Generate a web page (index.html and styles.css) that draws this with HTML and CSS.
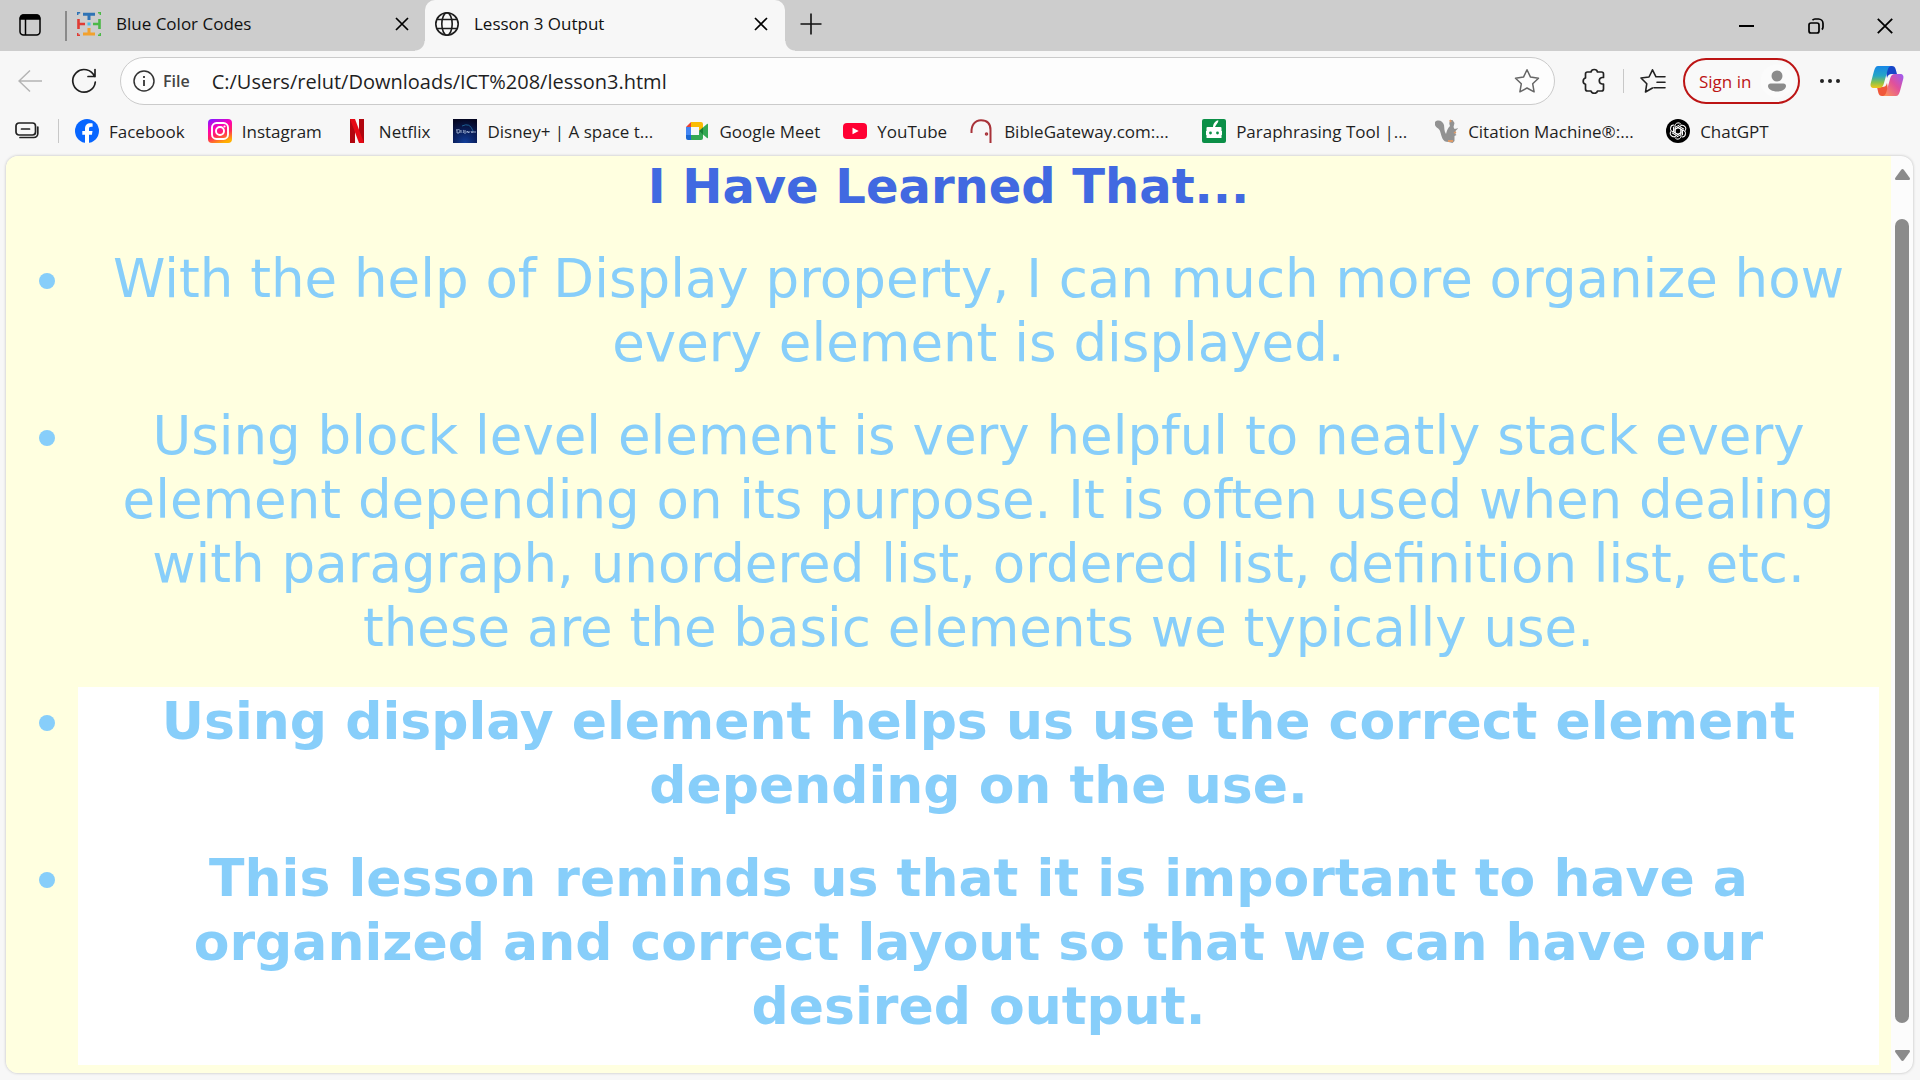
FILE: index.html
```html
<!DOCTYPE html>
<html lang="en">
<head>
<meta charset="utf-8">
<title>Lesson 3 Output</title>
<link rel="stylesheet" href="styles.css">
</head>
<body>
<header class="browser">
  <div class="tabstrip">
    <button class="icon-btn tab-actions" aria-label="Tab actions">
      <svg width="22" height="22" viewBox="0 0 22 22" fill="none" stroke="#000" stroke-width="1.5"><rect x="1" y="1" width="20" height="20" rx="3.5"/><path d="M1.5 5V4a3 3 0 0 1 3-3h13a3 3 0 0 1 3 3v1z" fill="#000"/><path d="M6.5 5v16"/></svg>
    </button>
    <div class="tab">
      <svg class="icon" viewBox="0 0 24 24" fill="none"><path d="M6 2.200h12M12 2v6" stroke="#2f73b5" stroke-width="3"/><path d="M6 22h12M12 22v-6" stroke="#f2a12e" stroke-width="3"/><path d="M1.500 7v10M1 12h7" stroke="#e03c35" stroke-width="2.600"/><path d="M22.500 7v10M23 12h-7" stroke="#4db848" stroke-width="2.600"/><path d="M10.500 12h3M12 10.500v3" stroke="#4ac0ea" stroke-width="3"/><path d="M.7 3V.7h2.500" stroke="#2f73b5" stroke-width="1.500"/><path d="M21 .7h2.300V3" stroke="#4db848" stroke-width="1.500"/><path d="M.7 21v2.300H3" stroke="#e03c35" stroke-width="1.500"/><path d="M21 23.300h2.300V21" stroke="#4db848" stroke-width="1.500"/></svg>
      <a class="tab-title" href="#">Blue Color Codes</a>
      <button class="icon-btn" aria-label="Close tab"><svg width="14" height="14" viewBox="0 0 14 14" stroke="#000" stroke-width="1.700"><path d="M1 1l12 12M13 1L1 13"/></svg></button>
    </div>
    <div class="tab tab-active">
      <svg class="icon" viewBox="0 0 24 24" fill="none" stroke="#1c1c1c" stroke-width="1.600"><circle cx="12" cy="12" r="11.200"/><ellipse cx="12" cy="12" rx="5.200" ry="11.200"/><path d="M2 7.500h20M2 16.500h20"/></svg>
      <a class="tab-title" href="#">Lesson 3 Output</a>
      <button class="icon-btn" aria-label="Close tab"><svg width="14" height="14" viewBox="0 0 14 14" stroke="#000" stroke-width="1.700"><path d="M1 1l12 12M13 1L1 13"/></svg></button>
    </div>
    <button class="icon-btn new-tab" aria-label="New tab"><svg width="22" height="22" viewBox="0 0 22 22" stroke="#111" stroke-width="1.600"><path d="M11 .5v21M.5 11h21"/></svg></button>
    <div class="window-controls">
      <button class="icon-btn" aria-label="Minimize"><svg width="16" height="16" viewBox="0 0 16 16" stroke="#000" stroke-width="2"><path d="M0 8h15"/></svg></button>
      <button class="icon-btn" aria-label="Restore"><svg width="16" height="16" viewBox="0 0 16 16" fill="none" stroke="#000" stroke-width="1.700"><rect x="1" y="5" width="10" height="10" rx="2"/><path d="M4.500 2.200C5.200 1.300 6 1 7 1h3.500A4.500 4.500 0 0 1 15 5.500V9c0 1.200-.4 2-1.200 2.500"/></svg></button>
      <button class="icon-btn" aria-label="Close"><svg width="16" height="16" viewBox="0 0 16 16" stroke="#000" stroke-width="1.800"><path d="M.8.8l14.400 14.400M15.200.8L.8 15.200"/></svg></button>
    </div>
  </div>

  <div class="toolbar">
    <button class="icon-btn" aria-label="Back"><svg width="24" height="24" viewBox="0 0 24 24" fill="none" stroke="#b4b4b4" stroke-width="1.500"><path d="M24 12H1M12 1.500L1 12l11 10.500"/></svg></button>
    <button class="icon-btn" aria-label="Refresh"><svg width="26" height="26" viewBox="0 0 26 26" fill="none" stroke="#1f1f1f" stroke-width="1.700" stroke-linecap="round"><path d="M23.500 8.500A11.300 11.300 0 1 0 24.300 14M24 1.500v7h-7"/></svg></button>
    <div class="omnibox">
      <svg class="info" width="22" height="22" viewBox="0 0 22 22" fill="none" stroke="#333" stroke-width="1.500"><circle cx="11" cy="11" r="10"/><path d="M11 10v6M11 6v2" stroke-width="1.800"/></svg>
      <label for="address">File</label>
      <input id="address" type="text" value="C:/Users/relut/Downloads/ICT%208/lesson3.html">
      <button class="icon-btn" aria-label="Add to favorites"><svg width="26" height="26" viewBox="0 0 26 26" fill="none" stroke="#666" stroke-width="1.500" stroke-linejoin="round"><path d="M13 1.800l3.500 7.300 8 1.100-5.800 5.600 1.400 8L13 20l-7.100 3.800 1.400-8L1.500 10.200l8-1.100z"/></svg></button>
    </div>
    <div class="tools">
      <button class="icon-btn" aria-label="Extensions"><svg width="26" height="26" viewBox="0 0 26 26" fill="none" stroke="#222" stroke-width="1.700" stroke-linejoin="round"><path d="M6.500 4h3.500a3.300 3 0 0 1 6.500 0H20.500a2 2 0 0 1 2 2v3.500H21a3.300 3.300 0 0 0 0 6.500h1.500V21a2 2 0 0 1-2 2h-4a3.300 2.800 0 0 1-6.500 0H6.500a2 2 0 0 1-2-2v-4.700a3.300 3.300 0 0 1 0-6.300V6a2 2 0 0 1 2-2z"/></svg></button>
      <span class="divider"></span>
      <button class="icon-btn" aria-label="Favorites"><svg width="26" height="26" viewBox="0 0 26 26" fill="none" stroke="#222" stroke-width="1.600" stroke-linejoin="round" stroke-linecap="round"><path d="M25 8.800h-9L12.500 1.800 9 9l-8 1 5.800 5.700L5.500 24l7-4M17 14.300h8M14 19.800h11"/></svg></button>
    </div>
    <button class="sign-in">Sign in
      <svg width="32" height="34" viewBox="0 0 32 34"><circle cx="16" cy="17" r="16.500" fill="#fbfbfb"/><circle cx="16" cy="12" r="5.500" fill="#8b8b8b"/><path d="M9.500 19.500h13c1.500 0 2.500 1 2.500 2.500 0 3.300-4.500 5.500-9 5.500s-9-2.200-9-5.500c0-1.500 1-2.500 2.500-2.500z" fill="#8b8b8b"/></svg>
    </button>
    <button class="icon-btn more" aria-label="Settings and more"><svg width="22" height="6" viewBox="0 0 22 6" fill="#222"><circle cx="3" cy="3" r="2"/><circle cx="11" cy="3" r="2"/><circle cx="19" cy="3" r="2"/></svg></button>
    <button class="icon-btn" aria-label="Copilot">
      <svg width="34" height="32" viewBox="0 0 34 32">
        <defs>
          <linearGradient id="cl" x1="0" y1="0" x2="0" y2="1"><stop offset="0" stop-color="#1787e8"/><stop offset=".45" stop-color="#26a6c4"/><stop offset=".75" stop-color="#8ac249"/><stop offset="1" stop-color="#f5c518"/></linearGradient>
          <linearGradient id="cr" x1="1" y1="0" x2="0" y2="1"><stop offset="0" stop-color="#9a5cf5"/><stop offset=".45" stop-color="#e0509c"/><stop offset="1" stop-color="#ff9a50"/></linearGradient>
        </defs>
        <path d="M15 1h7c2 0 3 1 3.600 3l1.400 5h-5c-3 0-4 1-5 4z" fill="#1746c8"/>
        <path d="M19 31h-7c-2 0-3-1-3.600-3L7 22h5c3 0 4-1 5-4z" fill="#f0583a"/>
        <path d="M8 1h13c-2 .5-2.800 2-3.500 4.500L14 18c-.9 3.400-2 5-5 5H4c-3 0-4-2-3.200-5L4 6c1-3.500 2-5 4-5z" fill="url(#cl)"/>
        <path d="M26 31H13c2-.5 2.800-2 3.500-4.500L20 14c.9-3.400 2-5 5-5h5c3 0 4 2 3.200 5L30 26c-1 3.500-2 5-4 5z" fill="url(#cr)"/>
      </svg>
    </button>
  </div>

  <nav class="bookmarks">
    <button class="icon-btn" aria-label="Saved tabs"><svg width="24" height="18" viewBox="0 0 24 18" fill="none" stroke="#222" stroke-width="1.700" stroke-linecap="round"><rect x="1" y="1" width="19.500" height="12" rx="3"/><path d="M6.500 7h8M22.800 5v6.500a4 4 0 0 1-4 4H5"/></svg></button>
    <span class="divider"></span>
    <a href="#"><svg class="icon" viewBox="0 0 24 24"><circle cx="12" cy="12" r="12" fill="#0866ff"/><path d="M10 24v-8.300H7.300V12H10v-2c0-4 1.800-5.800 5.500-5.800.8 0 1.700.1 2.100.3v3.300h-1.500c-1.600 0-2.100.7-2.100 2.200v2h3.500l-.6 3.700H14V24z" fill="#fff"/></svg>Facebook</a>
    <a href="#"><svg class="icon" viewBox="0 0 24 24"><defs><linearGradient id="ig" x1=".2" y1="0" x2=".6" y2="1"><stop offset="0" stop-color="#8a18ff"/><stop offset=".35" stop-color="#ff00b5"/><stop offset=".65" stop-color="#ff255e"/><stop offset="1" stop-color="#ffb000"/></linearGradient></defs><rect width="24" height="24" rx="4" fill="url(#ig)"/><g fill="none" stroke="#fff" stroke-width="1.900"><rect x="4" y="4" width="16" height="16" rx="4.500"/><circle cx="12" cy="12" r="4"/></g><circle cx="16.500" cy="7.500" r="1.100" fill="#fff"/></svg>Instagram</a>
    <a href="#"><svg class="icon" viewBox="0 0 24 24"><path d="M5 0h5v24H5zM14 0h5v24h-5z" fill="#b1060f"/><path d="M5 0h5l9 24h-5z" fill="#e50914"/></svg>Netflix</a>
    <a href="#"><svg class="icon" viewBox="0 0 24 24"><defs><radialGradient id="dp" cx=".5" cy="1" r="1"><stop offset="0" stop-color="#123f9c"/><stop offset=".5" stop-color="#0a1f5c"/><stop offset="1" stop-color="#050722"/></radialGradient></defs><rect width="24" height="24" fill="url(#dp)"/><path d="M9 7q8-4 11 5" fill="none" stroke="#1c5f92" stroke-width="1"/><path d="M3 11c4-1 5 0 3 3l-2 0 0-3M8 11v3M11 11c-2 1 1 1-1 3M12 11v4M14 14v-2l2 2v-2M18 12l1 2 1-2M20 13h3" fill="none" stroke="#a4b5d5" stroke-width=".9"/></svg><span class="clipped">Disney+ | A space t...</span></a>
    <a href="#"><svg class="icon" viewBox="0 0 24 24"><path d="M1 8l5-5v5z" fill="#ea4335"/><path d="M6 3h10a2 2 0 0 1 2 2v4l-4 3V8H6z" fill="#fbbc04"/><path d="M1 8h5v8H1z" fill="#4285f4"/><path d="M1 16h5v5H3a2 2 0 0 1-2-2z" fill="#1967d2"/><path d="M6 16h8v-4l4 3v4a2 2 0 0 1-2 2H6z" fill="#34a853"/><path d="M14 12l8-7c.6-.5 1-.2 1 .5v13c0 .7-.4 1-1 .5z" fill="#34a853"/><path d="M14 12l4-3.500v7z" fill="#188038"/></svg>Google Meet</a>
    <a href="#"><svg class="icon" viewBox="0 0 24 24"><rect y="4" width="24" height="16" rx="4" fill="#ff0033"/><path d="M9.500 8.800l6.200 3.200-6.200 3.200z" fill="#fff"/></svg>YouTube</a>
    <a href="#"><svg class="icon" viewBox="0 0 24 24" fill="none" stroke="#a83238"><path d="M1.500 14C1 6 5 1.200 11 1.200c7 0 9.500 4 9.500 9.800v13" stroke-width="2"/><circle cx="16.500" cy="15" r="1" stroke-width="1.500"/></svg><span class="clipped">BibleGateway.com:...</span></a>
    <a href="#"><svg class="icon" viewBox="0 0 24 24"><rect width="24" height="24" rx="2" fill="#0b8f47"/><path d="M6 8h5c0-3 1.500-5 4-6.500h1.500C16 4 14.500 5 13 8h5.500a1 1 0 0 1 1 1v3H20v4h-.5v3h-15v-3H4v-4h.5V9a1 1 0 0 1 1-1z" fill="#fff"/><circle cx="8.500" cy="14" r="1.400" fill="#0b8f47"/><circle cx="15.500" cy="14" r="1.400" fill="#0b8f47"/></svg><span class="clipped">Paraphrasing Tool |...</span></a>
    <a href="#"><svg class="icon" viewBox="0 0 24 24"><path d="M1 3c3-3 8-1 9 3 .5 3 0 6 2 9 1-4 2-6 4-8-1-2-1-4 .5-6l2 0 2 3-1 4 1 2 4-1-3 3 0 3 1 1-2 1 0 5-2 2-4-1C8 23 8 18 6 12 5 9 2 9 1 6z" fill="#929292"/><path d="M14 22h5M20 14l2-1M16 1l1 2" stroke="#dc9a68" stroke-width="1.800"/></svg><span class="clipped">Citation Machine®:...</span></a>
    <a href="#"><svg class="icon" viewBox="0 0 24 24"><circle cx="12" cy="12" r="12" fill="#000"/><g fill="none" stroke="#fff" stroke-width="1"><path id="k" d="M12 8.600l3 1.700v5.200l-4.500 2.600M9.200 8.500a3.200 3.200 0 0 1 6-2.800"/><use href="#k" transform="rotate(60 12 12)"/><use href="#k" transform="rotate(120 12 12)"/><use href="#k" transform="rotate(180 12 12)"/><use href="#k" transform="rotate(240 12 12)"/><use href="#k" transform="rotate(300 12 12)"/></g></svg>ChatGPT</a>
  </nav>
</header>

<div class="viewport">
  <main class="page">
    <h1>I Have Learned That...</h1>
    <ul class="lessons">
      <li>With the help of Display property, I can much more organize how every element is displayed.</li>
      <li>Using block level element is very helpful to neatly stack every element depending on its purpose. It is often used when dealing with paragraph, unordered list, ordered list, definition list, etc. these are the basic elements we typically use.</li>
      <li class="highlight">Using display element helps us use the correct element depending on the use.</li>
      <li class="highlight">This lesson reminds us that it is important to have a organized and correct layout so that we can have our desired output.</li>
    </ul>
  </main>
  <div class="scrollbar">
    <svg width="15" height="11" viewBox="0 0 15 11"><path d="M6.200.8q1.300-1.500 2.600 0l6 8.200q.6 2-1 2H1.200q-1.600 0-1-2z" fill="#8b8b8b"/></svg>
    <div class="thumb"></div>
    <svg width="15" height="11" viewBox="0 0 15 11"><path d="M6.200 10.200q1.300 1.500 2.600 0l6-8.200q.6-2-1-2H1.200q-1.600 0-1 2z" fill="#8b8b8b"/></svg>
  </div>
</div>
</body>
</html>
```
FILE: styles.css
```css
* { box-sizing: border-box; }

body {
  margin: 0;
  background: #f7f7f7;
  color: #1f1f1f;
  font-family: "Open Sans", "Noto Sans", sans-serif;
  font-size: 17px;
}

a { color: inherit; text-decoration: none; }
svg { display: block; flex: none; }

.icon { width: 24px; height: 24px; }

.icon-btn {
  display: flex;
  align-items: center;
  justify-content: center;
  padding: 0;
  border: 0;
  background: none;
}

.divider { width: 1px; height: 24px; background: #c8c8c8; }

/* Tab strip */
.tabstrip {
  display: flex;
  align-items: center;
  height: 51px;
  padding: 0 27px 0 19px;
  background: #cdcdcd;
  color: #111;
}

.tab-actions { margin-right: 24px; padding-bottom: 2px; }

.tab {
  display: flex;
  align-items: center;
  width: 360px;
  height: 30px;
  padding: 0 16px 4px 10px;
  border-left: 2px solid #8a8a8a;
}

.tab-title { flex: 1; margin-left: 15px; }

.tab-active {
  position: relative;
  height: 51px;
  padding: 0 17px 4px 10px;
  border: 0;
  border-radius: 10px 10px 0 0;
  background: #f7f7f7;
}

.tab-active::before,
.tab-active::after {
  content: "";
  position: absolute;
  bottom: 0;
  width: 10px;
  height: 10px;
}
.tab-active::before { left: -10px; background: radial-gradient(circle at 0 0, #cdcdcd 9px, #f7f7f7 10px); }
.tab-active::after { right: -10px; background: radial-gradient(circle at 100% 0, #cdcdcd 9px, #f7f7f7 10px); }

.new-tab { margin-left: 15px; padding-bottom: 4px; }

.window-controls { display: flex; gap: 53px; margin-left: auto; }

/* Address row */
.toolbar {
  display: flex;
  align-items: center;
  height: 60px;
  padding: 0 16px 0 18px;
}

.toolbar > .icon-btn + .icon-btn { margin-left: 29px; }

.omnibox {
  display: flex;
  flex: 1;
  align-items: center;
  height: 48px;
  margin-left: 23px;
  padding: 0 14px 0 12px;
  border: 1px solid #cbcbcb;
  border-radius: 24px;
  background: #fdfdfd;
}

.omnibox label { margin-left: 8px; font-weight: 600; font-size: 16px; color: #444; }

.omnibox input {
  flex: 1;
  margin-left: 22px;
  padding: 0;
  border: 0;
  outline: 0;
  background: none;
  color: #1f1f1f;
  font: 20px "Open Sans", "Noto Sans", sans-serif;
}

.tools { display: flex; align-items: center; gap: 16px; margin: 0 17px 0 26px; }

.sign-in {
  display: flex;
  align-items: center;
  justify-content: space-between;
  width: 117px;
  height: 46px;
  padding: 0 5px 0 14px;
  border: 2px solid #bc1414;
  border-radius: 23px;
  background: #f9f9f9;
  color: #bc1414;
  font: 17px "Open Sans", "Noto Sans", sans-serif;
}

.more { margin-left: 19px; }

/* Favorites row */
.bookmarks {
  display: flex;
  align-items: center;
  gap: 23px;
  height: 45px;
  padding: 0 16px 5px 15px;
  white-space: nowrap;
}

.bookmarks .divider { margin: 0 -7px 0 -4px; }
.bookmarks a { display: flex; align-items: center; gap: 10px; }
.clipped { width: 175px; overflow: hidden; }

/* Page shown in the window */
.viewport {
  display: flex;
  margin: 0 7px 7px 6px;
  overflow: hidden;
  border-radius: 12px;
  background: #fcfcfc;
  box-shadow: 0 0 3px #b8b8b8;
}

.page {
  flex: 1;
  padding: 1px 12px 8px;
  background: #ffffe0;
  font-family: Verdana, "DejaVu Sans", sans-serif;
  text-align: center;
}

.page h1 { margin: 0 0 30px; color: #4169e1; font-size: 48px; line-height: 58px; }

.lessons {
  margin: 0;
  padding-left: 60px;
  color: #87cefa;
  font-size: 53px;
  line-height: 64px;
}

.lessons li { padding: 2px 0 27px; }
.highlight { background: #fff; font-size: 52px; font-weight: bold; }

.scrollbar {
  display: flex;
  flex-direction: column;
  align-items: center;
  width: 22px;
  padding: 13px 0 12px;
}

.thumb { flex: 1; width: 14px; margin: 39px 0 27px; border-radius: 7px; background: #8b8b8b; }
```
